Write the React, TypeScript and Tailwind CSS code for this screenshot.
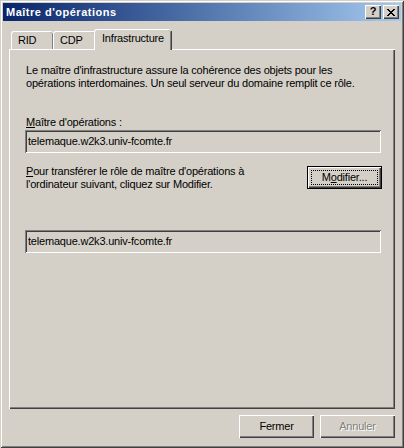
import React from "react";

const face = "bg-[#d4d0c8]";
const raised =
  "shadow-[inset_1px_1px_0_#fff,inset_-1px_-1px_0_#404040,inset_-2px_-2px_0_#808080]";
const sunken =
  "shadow-[inset_1px_1px_0_#808080,inset_-1px_-1px_0_#fff,inset_2px_2px_0_#404040,inset_-2px_-2px_0_#d4d0c8]";

function Tab({ label, active, w }: { label: string; active?: boolean; w: string }) {
  return (
    <div
      className={`${w} ${face} relative flex items-start rounded-t-[3px] border-t border-l border-white shadow-[inset_-1px_0_0_#808080] ${
        active
          ? "z-10 -mx-[2px] -mb-px h-[21px] pt-[2px] pl-[7px]"
          : "h-[18px] pt-[2px] pl-[6px]"
      }`}
    >
      <div className="absolute top-[1px] right-[-1px] bottom-0 w-px bg-[#404040]" />
      <span className="leading-[13px]">{label}</span>
    </div>
  );
}

function Field({ value }: { value: string }) {
  return (
    <div className={`h-[23px] w-[356px] ${face} ${sunken} flex items-center pl-[3px]`}>
      <span className="leading-[13px]">{value}</span>
    </div>
  );
}

function Button({ children, disabled, w = "w-[75px]" }: { children: React.ReactNode; disabled?: boolean; w?: string }) {
  return (
    <div className={`${w} h-[23px] ${face} ${raised} flex items-center justify-center`}>
      <span
        className={`leading-[13px] ${
          disabled ? "text-[#808080] [text-shadow:1px_1px_0_#fff]" : "text-black"
        }`}
      >
        {children}
      </span>
    </div>
  );
}

export default function App() {
  return (
    <div
      className={`w-[404px] h-[448px] ${face} flex flex-col p-[3px] text-[11px] tracking-[-0.2px] text-black shadow-[inset_1px_1px_0_#d4d0c8,inset_-1px_-1px_0_#404040,inset_2px_2px_0_#fff,inset_-2px_-2px_0_#808080]`}
      style={{ fontFamily: '"Liberation Sans", Arial, sans-serif' }}
    >
      {/* Title bar */}
      <div className="h-[18px] flex items-center justify-between bg-gradient-to-r from-[#0a246a] to-[#a6caf0] pl-[3px] pr-[2px]">
        <span className="text-white font-bold text-[11px] tracking-[0.5px] leading-[13px]">Maître d'opérations</span>
        <div className="flex gap-[2px]">
          <div className={`w-[16px] h-[14px] ${face} ${raised} flex items-center justify-center`}>
            <span className="font-bold text-[11px] leading-none -mt-px">?</span>
          </div>
          <div className={`w-[16px] h-[14px] ${face} ${raised} flex items-center justify-center`}>
            <svg width="8" height="7" viewBox="0 0 8 7" shapeRendering="crispEdges">
              <path d="M0 0h2v1h-2zM6 0h2v1h-2zM1 1h2v1h-2zM5 1h2v1h-2zM2 2h4v1h-4zM3 3h2v1h-2zM2 4h4v1h-4zM1 5h2v1h-2zM5 5h2v1h-2zM0 6h2v1h-2zM6 6h2v1h-2z" fill="#000" />
            </svg>
          </div>
        </div>
      </div>

      {/* Tabs + panel */}
      <div className="px-[6px] pt-[8px]">
        <div className="flex items-end pl-[2px] h-[20px]">
          <Tab label="RID" w="w-[42px]" />
          <Tab label="CDP" w="w-[43px]" />
          <Tab label="Infrastructure" w="w-[77px]" active />
        </div>
        <div className="h-[360px] w-[386px] border-t border-l border-white shadow-[inset_-1px_-1px_0_#404040,inset_-2px_-2px_0_#808080] pl-[15px] pt-[14px]">
          <p className="leading-[13px] pl-px">
            Le maître d'infrastructure assure la cohérence des objets pour les
            <br />
            opérations interdomaines. Un seul serveur du domaine remplit ce rôle.
          </p>
          <p className="leading-[13px] pl-px mt-[26px]">
            <span className="underline underline-offset-1">M</span>aître d'opérations :
          </p>
          <div className="mt-px">
            <Field value="telemaque.w2k3.univ-fcomte.fr" />
          </div>
          <div className="flex justify-between w-[357px] mt-[12px]">
            <p className="leading-[13px] pl-px">
              <span className="underline underline-offset-1">P</span>our transférer le rôle de maître d'opérations à
              <br />
              l'ordinateur suivant, cliquez sur Modifier.
            </p>
            <div className="w-[75px] h-[23px] mt-px border border-black">
              <div className={`w-full h-full ${face} ${raised} p-[3px]`}>
                <div className="w-full h-full border border-dotted border-black flex items-center justify-center">
                  <span className="leading-[13px]">
                    M<span className="underline underline-offset-1">o</span>difier...
                  </span>
                </div>
              </div>
            </div>
          </div>
          <div className="mt-[39px]">
            <Field value="telemaque.w2k3.univ-fcomte.fr" />
          </div>
        </div>
      </div>

      {/* Bottom buttons */}
      <div className="flex justify-end gap-[6px] pr-[6px] mt-[6px]">
        <Button>Fermer</Button>
        <Button disabled>Annuler</Button>
      </div>
    </div>
  );
}
